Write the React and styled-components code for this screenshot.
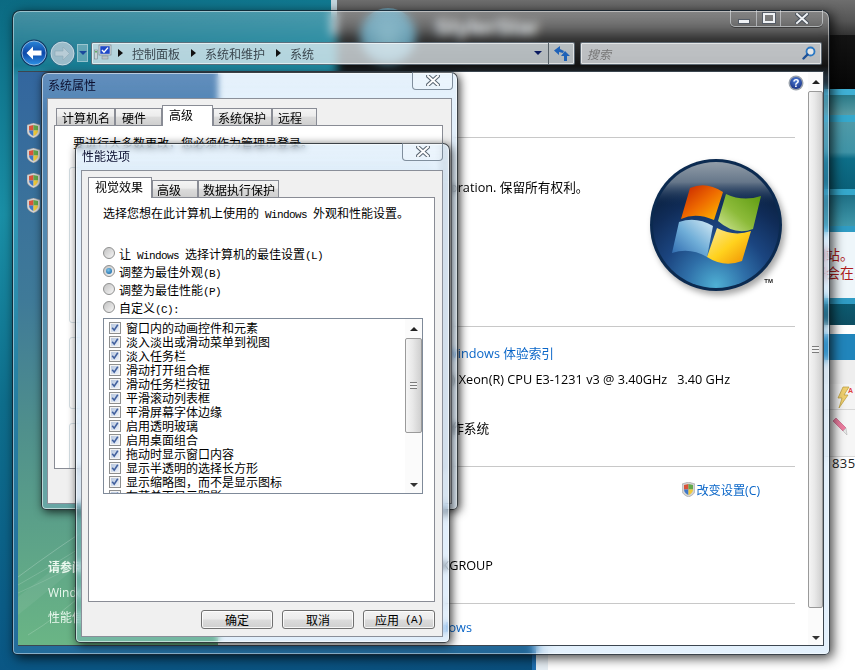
import React from "react";
import styled, { createGlobalStyle } from "styled-components";

const Global = createGlobalStyle`
  html, body { margin: 0; padding: 0; background: #0a4a78; }
  body { font-family: "Noto Sans CJK SC", "Liberation Sans", sans-serif; font-size: 12px; color: #000; }
  * { box-sizing: border-box; }
`;

const Desktop = styled.div`
  position: relative; width: 855px; height: 670px; overflow: hidden;
  background: linear-gradient(165deg, #0b6a82 0%, #1a8fa6 24%, #0e6e8c 45%, #0a5684 75%, #0a4a78 100%);
`;

/* ---------- window behind the explorer ---------- */
const BackPage = styled.div`
  position: absolute; left: 331px; top: 0; width: 524px; height: 670px;
  display: flex; flex-direction: column; overflow: hidden;
`;
const GrayBand = styled.div`
  height: 35px; flex: none; border-left: 6px solid #c3d6de;
  background: linear-gradient(#6e6e6e, #555 60%, #333);
`;
const BlackBand = styled.div`
  height: 54px; flex: none; margin-left: 6px; background: linear-gradient(#141414, #060606);
`;
const Orb = styled.div`
  position: absolute; left: 29px; top: 8px; width: 56px; height: 56px; border-radius: 50%; opacity: .78;
  background: radial-gradient(circle at 50% 55%, #8ed4ea, #5aa9c8 60%, #9fb2bc 100%);
`;
const Brand = styled.div`
  position: absolute; left: 104px; top: 15px; color: #e4eaee; font: bold 22px "Liberation Sans", sans-serif;
`;
const Band = styled.div`
  flex: none; height: ${(p) => p.$h}px; margin-left: 6px; background: ${(p) => p.$bg};
`;
const NoticeBand = styled(Band)`
  color: #b01c1c; font-size: 14px; line-height: 18px; padding: 13px 0 0 475px; white-space: nowrap;
`;
const IconBand = styled(Band)`
  padding: ${(p) => p.$pt}px 0 0 ${(p) => p.$pl}px; border-bottom: 1px solid #d8d8d8;
`;
const CountBand = styled(Band)`
  padding-left: 495px; font: 13px/12px "Open Sans", sans-serif; color: #222; letter-spacing: .4px;
`;
const BottomFill = styled.div`
  flex: 1; margin-left: 6px;
  background: linear-gradient(90deg, transparent 195px, #1f6fb0 195px, #1f6fb0 199px, #e6eef4 199px, #e6eef4 211px, #fff 211px);
`;

/* ---------- explorer ---------- */
const Explorer = styled.div`
  position: absolute; left: 12px; top: 10px; width: 818px; height: 645px;
  padding: 0 5px 8px 5px; display: flex; flex-direction: column;
  border-radius: 8px 8px 5px 5px;
  border: 1px solid rgba(10, 20, 30, .8);
  background-image: linear-gradient(rgba(255,255,255,.24), rgba(255,255,255,.03) 55px, rgba(128,188,240,.22) 66px);
  backdrop-filter: blur(5px);
  box-shadow: inset 0 0 0 1px rgba(255,255,255,.45), 3px 3px 12px rgba(0,0,0,.75);
`;
const CaptionRow = styled.div`
  display: flex; justify-content: flex-end; height: 16px; flex: none; margin-top: -1px; padding-right: 1px;
`;
const Caption = styled.div`
  display: flex; height: 17px; border: 1px solid rgba(235,240,245,.55); border-top: 0;
  border-radius: 0 0 5px 5px; box-shadow: 0 1px 0 rgba(0,0,0,.4);
`;
const CapBtn = styled.div`
  width: ${(p) => p.$w}px; display: flex; align-items: center; justify-content: center;
  border-right: 1px solid rgba(235,240,245,.5);
  &:last-child { border-right: 0; }
`;
const MinGlyph = styled.div`
  width: 12px; height: 5px; margin-top: 6px; background: #eef1f4; border: 1px solid #555c66;
`;
const MaxGlyph = styled.div`
  width: 12px; height: 10px; border: 2px solid #eef1f4; outline: 1px solid #555c66;
`;
const NavRow = styled.div`
  display: flex; align-items: center; height: 28px; margin-top: 13px; padding-left: 2px; flex: none;
`;
const NavDrop = styled.div`
  width: 11px; height: 18px; margin: 0 3px 0 1px; display: flex; align-items: center; justify-content: center;
  border: 1px solid rgba(255,255,255,.35); background: rgba(255,255,255,.28);
`;
const TriDown = styled.div`
  width: 0; height: 0;
  border-left: ${(p) => p.$s || 4}px solid transparent; border-right: ${(p) => p.$s || 4}px solid transparent;
  border-top: ${(p) => p.$s || 4}px solid ${(p) => p.$c || "#0a1a60"};
`;
const Address = styled.div`
  width: 484px; height: 23px; display: flex; align-items: center;
  border: 1px solid rgba(30,45,60,.6); border-radius: 2px;
  box-shadow: inset 0 0 0 1px rgba(255,255,255,.6);
  background: rgba(232,240,244,.74); color: #3b474f; padding-left: 2px;
`;
const Crumb = styled.span`
  margin-left: 9px; white-space: nowrap;
`;
const CrumbArrow = styled.div`
  width: 0; height: 0; margin-left: ${(p) => p.$ml}px; flex: none;
  border-top: 4px solid transparent; border-bottom: 4px solid transparent; border-left: 5px solid #111;
`;
const Spacer = styled.div` flex: 1; `;
const AddrEnd = styled.div`
  width: 26px; height: 21px; margin-left: 6px; display: flex; align-items: center; justify-content: center;
  border-left: 1px solid #555f66;
`;
const Search = styled.div`
  width: 242px; height: 23px; margin-left: 5px; display: flex; align-items: center; justify-content: space-between;
  padding: 0 5px 0 6px; border: 1px solid rgba(30,45,60,.6); border-radius: 2px;
  box-shadow: inset 0 0 0 1px rgba(255,255,255,.6);
  background: rgba(232,236,240,.78); color: #777; font-style: italic;
`;
const Content = styled.div`
  flex: 1; min-height: 0; margin-top: 4px; display: flex; overflow: hidden;
  border: 1px solid #3c4650; border-left: 0;
`;
const Sidebar = styled.div`
  position: relative; width: 200px; flex: none; display: flex; flex-direction: column; justify-content: space-between;
  padding: 51px 0 15px 9px; overflow: hidden;
  background: linear-gradient(#33669e 0%, #3f7a98 40%, #4f8f8c 62%, #6ab585 100%);
`;
const TaskList = styled.div` display: flex; flex-direction: column; gap: 10px; `;
const Task = styled.div` display: flex; align-items: center; height: 15px; `;
const SeeAlso = styled.div` padding-left: 21px; color: #e9f8ee; position: relative; `;
const SeeRow = styled.div`
  height: 25px; line-height: 25px; white-space: nowrap; font-weight: ${(p) => (p.$b ? 700 : 400)};
  font-family: "Open Sans", "Noto Sans CJK SC", sans-serif;
`;
const Swoosh = styled.svg` position: absolute; left: 0; bottom: 0; `;

const Main = styled.div`
  flex: 1; min-width: 0; background: #fff; overflow: hidden; padding-right: 13px;
  font-family: "Open Sans", "Noto Sans CJK SC", sans-serif; font-size: 12.7px;
`;
const Section = styled.div`
  height: ${(p) => p.$h}px; flex: none; padding-top: ${(p) => p.$pt || 0}px;
  border-bottom: ${(p) => (p.$last ? 0 : "1px solid #c8c8c8")};
`;
const HelpSection = styled(Section)`
  display: flex; justify-content: flex-end; align-items: flex-start; padding: 3px 0 0;
  svg { margin-right: -9px; }
`;
const Row = styled.div`
  height: ${(p) => p.$h}px; padding-left: ${(p) => p.$i}px; display: flex; align-items: center; white-space: nowrap;
`;
const Link = styled.span` color: #0a66c8; `;
const WinSection = styled(Section)` display: flex; justify-content: space-between; padding-top: 0; `;
const WinText = styled.div` flex: 1; min-width: 0; padding-top: 36px; `;
const LogoWrap = styled.div` position: relative; width: 132px; height: 132px; flex: none; margin: 21px 13px 0 0; `;
const Tm = styled.span`
  position: absolute; right: 9px; bottom: 7px; font: bold 6px "Liberation Sans", sans-serif; color: #222;
`;
const SettingsRow = styled(Row)` justify-content: flex-end; padding-right: 35px; `;
const ChangeLink = styled(Link)` display: inline-flex; align-items: center; gap: 1px; font-size: 12.2px; `;

/* ---------- scrollbars ---------- */
const Scroll = styled.div`
  width: ${(p) => p.$w}px; flex: none; display: flex; flex-direction: column; align-items: stretch; background: #fbfbfb;
`;
const ScrollBtn = styled.div`
  height: ${(p) => p.$h}px; flex: none; display: flex; align-items: center; justify-content: center;
`;
const Thumb = styled.div`
  height: ${(p) => p.$h}px; flex: none; display: flex; align-items: center; justify-content: center;
  border: 1px solid #9a9a9a; border-radius: 2px;
  background: linear-gradient(90deg, #f5f5f5, #e8e8e8 45%, #cfcfcf);
`;
const Grip = styled.div`
  width: 7px; height: 7px;
  background: repeating-linear-gradient(#7c7c7c 0 1px, #f2f2f2 1px 3px);
`;
const TriUp = styled.div`
  width: 0; height: 0; border-left: 4px solid transparent; border-right: 4px solid transparent; border-bottom: 4px solid #222;
`;

/* ---------- dialogs ---------- */
const Dialog = styled.div`
  position: absolute; left: ${(p) => p.$x}px; top: ${(p) => p.$y}px; width: ${(p) => p.$w}px; height: ${(p) => p.$h}px;
  padding: ${(p) => p.$head}px ${(p) => p.$r}px 5px 5px; border-radius: 7px 7px 5px 5px;
  display: flex; flex-direction: column;
  border: 1px solid rgba(30,35,40,.85);
  background-color: rgba(128, 188, 240, .24);
  background-image: linear-gradient(rgba(255,255,255,.16), rgba(255,255,255,.04) 40px);
  backdrop-filter: blur(3px);
  box-shadow: inset 0 0 0 1px rgba(255,255,255,.55), 2px 2px 10px rgba(0,0,0,.75);
`;
const DialogTitle = styled.div`
  position: absolute; left: 6px; top: 4px; color: #0c1030; font-size: 12px; line-height: 15px;
`;
const DialogClose = styled.div`
  position: absolute; right: ${(p) => p.$r}px; top: -1px; width: 41px; height: 18px; display: flex; align-items: center; justify-content: center;
  border: 1px solid rgba(110,125,140,.85); border-top: 0; border-radius: 0 0 4px 4px;
  background: rgba(255,255,255,.22);
`;
const Inner = styled.div`
  flex: 1; min-height: 0; padding: 6px ${(p) => p.$pr}px 7px 6px; background: #f0f0f0;
  border: 1px solid #8a8f99; display: flex; flex-direction: column;
`;
const Tabs = styled.div`
  display: flex; align-items: flex-end; margin: 0 0 -1px ${(p) => p.$ml || 0}px; position: relative; z-index: 1; flex: none;
`;
const Tab = styled.div`
  width: ${(p) => p.$w}px; height: ${(p) => (p.$active ? 21 : 18)}px;
  padding-left: ${(p) => p.$pl}px; line-height: 17px;
  border: 1px solid #898c95; border-bottom: ${(p) => (p.$active ? 0 : "1px solid #898c95")};
  white-space: nowrap;
  background: ${(p) => (p.$active ? "#fff" : "linear-gradient(#f4f4f4, #ececec 45%, #dcdcdc 50%, #cfcfcf)")};
`;
const Page = styled.div`
  flex: ${(p) => (p.$fixed ? "none" : 1)}; height: ${(p) => (p.$fixed ? `${p.$fixed}px` : "auto")}; min-height: 0;
  background: #fff; border: 1px solid #898c95; overflow: hidden;
  padding: ${(p) => p.$pad};
  display: flex; flex-direction: column;
`;
const Note = styled.div` line-height: 14px; white-space: nowrap; margin-left: ${(p) => p.$ml || 0}px; `;
const Group = styled.div`
  height: ${(p) => p.$h}px; flex: none; margin-top: ${(p) => p.$mt}px; width: 361px;
  border: 1px solid #d5dfe5; border-radius: 3px;
`;
const Mono = styled.span`
  font-family: "Liberation Mono", monospace; font-size: 11px; letter-spacing: -.6px;
`;
const RadioList = styled.div` margin-top: 22px; display: flex; flex-direction: column; `;
const RadioRow = styled.div`
  height: 18px; display: flex; align-items: center; gap: 4px; white-space: nowrap;
`;
const RadioDot = styled.div`
  width: 12px; height: 12px; border-radius: 50%; flex: none; border: 1px solid #8e8f8f;
  display: flex; align-items: center; justify-content: center;
  background: linear-gradient(135deg, #c2c2c2, #f6f6f6);
  &::after {
    content: ""; width: 6px; height: 6px; border-radius: 50%;
    background: ${(p) => (p.$on ? "radial-gradient(circle at 40% 35%, #7ec4ea, #0a5a9c)" : "transparent")};
  }
`;
const ListBox = styled.div`
  margin-top: 2px; width: 320px; height: 176px; flex: none; border: 1px solid #7f8a99; display: flex; background: #fff;
`;
const ListItems = styled.div` flex: 1; min-width: 0; overflow: hidden; padding: 2px 0 0 5px; `;
const ListItem = styled.div`
  height: 14px; display: flex; align-items: center; gap: 5px; white-space: nowrap; line-height: 14px;
`;
const Buttons = styled.div`
  flex: none; display: flex; justify-content: flex-end; gap: 9px; margin-top: 8px;
`;
const Btn = styled.div`
  width: 72px; height: 19px; display: flex; align-items: center; justify-content: center; white-space: pre;
  border: 1px solid #707070; border-radius: 3px; box-shadow: inset 0 0 0 1px rgba(255,255,255,.8);
  background: linear-gradient(#f3f3f3, #ebebeb 48%, #dcdcdc 52%, #cfcfcf);
`;

/* ---------- drawings ---------- */
const Shield = () => (
  <svg width="13" height="15" viewBox="0 0 13 15" style={{ flex: "none" }}>
    <path d="M6.5 0 L13 2 V8 C13 12 9 14 6.5 15 C4 14 0 12 0 8 V2 Z" fill="#d4d4d4" stroke="#8a8a8a" strokeWidth=".5" />
    <path d="M6.5 2 L2 3 V7.5 H6.5 Z" fill="#d9533a" />
    <path d="M6.5 2 L11 3 V7.5 H6.5 Z" fill="#63a84a" />
    <path d="M2 7.5 H6.5 V13 C4.5 12.2 2 10.5 2 7.5 Z" fill="#3f78c8" />
    <path d="M11 7.5 H6.5 V13 C8.5 12.2 11 10.5 11 7.5 Z" fill="#f0c93a" />
  </svg>
);
const CloseX = ({ c = "#eef1f4", o = "#4a525c", s = 14 }) => (
  <svg width={s} height={s - 3} viewBox="0 0 14 11">
    <path d="M2 1 L12 10 M12 1 L2 10" stroke={o} strokeWidth="4" strokeLinecap="square" />
    <path d="M2 1 L12 10 M12 1 L2 10" stroke={c} strokeWidth="2" strokeLinecap="square" />
  </svg>
);
const BackButton = () => (
  <svg width="28" height="28" viewBox="0 0 28 28" style={{ flex: "none" }}>
    <defs>
      <linearGradient id="bk" x1="0" y1="0" x2="0" y2="1">
        <stop offset="0" stopColor="#2a86d8" /><stop offset=".5" stopColor="#0d47a8" /><stop offset="1" stopColor="#2d92e6" />
      </linearGradient>
    </defs>
    <circle cx="14" cy="14" r="13.5" fill="#123a66" />
    <circle cx="14" cy="14" r="12" fill="url(#bk)" stroke="#a9cdea" strokeWidth=".8" />
    <path d="M13 7.5 L6.5 14 L13 20.5 L13 16.5 L21.5 16.5 L21.5 11.5 L13 11.5 Z" fill="#fff" />
  </svg>
);
const ForwardButton = () => (
  <svg width="27" height="27" viewBox="0 0 27 27" style={{ flex: "none", marginLeft: 1 }}>
    <circle cx="13.5" cy="13.5" r="13" fill="rgba(60,110,140,.55)" />
    <circle cx="13.5" cy="13.5" r="11.5" fill="rgba(175,200,212,.85)" stroke="#d8e6ec" strokeWidth=".8" />
    <path d="M14 7 L20.5 13.5 L14 20 L14 16 L6 16 L6 11 L14 11 Z" fill="#b8ccd6" stroke="#8fa9b6" strokeWidth=".6" />
  </svg>
);
const ComputerIcon = () => (
  <svg width="18" height="18" viewBox="0 0 18 18" style={{ flex: "none" }}>
    <rect x="0.5" y="6" width="3" height="9" fill="#c9d3d8" stroke="#7c868c" strokeWidth=".6" />
    <rect x="1.3" y="7" width="1.4" height="1.5" fill="#35a03a" />
    <rect x="5" y="1" width="12" height="10" fill="#d8dfe4" stroke="#7c868c" strokeWidth=".7" />
    <rect x="6.3" y="2.2" width="9.4" height="7.6" fill="#1f49c8" />
    <path d="M8 6 L10 8.2 L14 3.6" stroke="#fff" strokeWidth="1.4" fill="none" />
    <rect x="8" y="12" width="6" height="3" fill="#b9c3c9" stroke="#7c868c" strokeWidth=".5" />
  </svg>
);
const RefreshIcon = () => (
  <svg width="16" height="15" viewBox="0 0 16 15">
    <path d="M6 0 L6 3 L10 5 L9 7 L5 6 L5 9 L0 4.5 Z" fill="#1f62b8" />
    <path d="M11 5 L16 10 L13 10 L13 15 L10 15 L10 10 L7 10 Z" fill="#1f62b8" />
  </svg>
);
const SearchIcon = () => (
  <svg width="14" height="14" viewBox="0 0 14 14">
    <circle cx="8.5" cy="5.5" r="4" fill="rgba(255,255,255,.6)" stroke="#2a78c4" strokeWidth="1.8" />
    <path d="M5.5 8.5 L1.5 12.5" stroke="#1d4f96" strokeWidth="2.4" strokeLinecap="round" />
  </svg>
);
const HelpIcon = () => (
  <svg width="16" height="16" viewBox="0 0 16 16">
    <defs>
      <radialGradient id="hp" cx=".5" cy=".3" r=".8">
        <stop offset="0" stopColor="#4f7fd8" /><stop offset="1" stopColor="#13297c" />
      </radialGradient>
    </defs>
    <circle cx="8" cy="8" r="7.5" fill="#9aa2ac" />
    <circle cx="8" cy="8" r="6" fill="url(#hp)" />
    <text x="8" y="12" textAnchor="middle" fill="#fff" fontSize="11" fontWeight="700" fontFamily="Liberation Sans">?</text>
  </svg>
);
const CheckMark = () => (
  <svg width="12" height="12" viewBox="0 0 12 12" style={{ flex: "none" }}>
    <defs>
      <linearGradient id="cb" x1="0" y1="0" x2="1" y2="1">
        <stop offset="0" stopColor="#b6c6de" /><stop offset="1" stopColor="#eef3fa" />
      </linearGradient>
    </defs>
    <rect x=".5" y=".5" width="11" height="11" fill="#f4f4f4" stroke="#8e8f8f" />
    <rect x="2" y="2" width="8" height="8" fill="url(#cb)" />
    <path d="M3.2 5.8 L5.2 8.2 L8.8 2.8" stroke="#41609e" strokeWidth="1.6" fill="none" />
  </svg>
);
const WindowsLogo = () => (
  <svg width="132" height="132" viewBox="0 0 132 132" style={{ display: "block", overflow: "visible", filter: "drop-shadow(3px 4px 3px rgba(0,0,0,.35))" }}>
    <defs>
      <radialGradient id="orb" cx=".5" cy=".98" r=".8">
        <stop offset="0" stopColor="#4fb0d4" /><stop offset=".3" stopColor="#2f6fa8" /><stop offset=".55" stopColor="#1b4580" /><stop offset=".85" stopColor="#102c58" /><stop offset="1" stopColor="#0c2548" />
      </radialGradient>
      <linearGradient id="gloss" x1="0" y1="0" x2="0" y2="1">
        <stop offset="0" stopColor="#929da8" /><stop offset=".16" stopColor="#66778a" /><stop offset=".34" stopColor="#14305a" stopOpacity="0" />
      </linearGradient>
      <linearGradient id="fr" x1="0" y1="0" x2="1" y2="1">
        <stop offset="0" stopColor="#c41e00" /><stop offset=".5" stopColor="#ee6a00" /><stop offset="1" stopColor="#ffc000" />
      </linearGradient>
      <linearGradient id="fg" x1="1" y1="0" x2="0" y2="1">
        <stop offset="0" stopColor="#5d9a10" /><stop offset=".55" stopColor="#8dbb3a" /><stop offset="1" stopColor="#d4e89c" />
      </linearGradient>
      <linearGradient id="fb" x1="1" y1="0" x2="0" y2="1">
        <stop offset="0" stopColor="#d6ebf5" /><stop offset=".5" stopColor="#70aed8" /><stop offset="1" stopColor="#2a66ac" />
      </linearGradient>
      <linearGradient id="fy" x1="0" y1="0" x2="1" y2="1">
        <stop offset="0" stopColor="#f8e89c" /><stop offset=".5" stopColor="#ffd21e" /><stop offset="1" stopColor="#ee8a00" />
      </linearGradient>
    </defs>
    <circle cx="66" cy="66" r="66" fill="#0b2a50" />
    <circle cx="66" cy="66" r="63" fill="url(#orb)" />
    <circle cx="66" cy="66" r="63" fill="url(#gloss)" />
    <path d="M40 29 Q56 22 73 33 L64 61 Q46 53 31 60 Z" fill="url(#fr)" />
    <path d="M76 35 Q93 43 111 37 L103 70 Q85 77 68 62 Z" fill="url(#fg)" />
    <path d="M29 63 Q46 57 63 67 L57 98 Q40 88 22 94 Z" fill="url(#fb)" />
    <path d="M67 69 Q84 78 101 72 L92 102 Q74 109 57 98 Z" fill="url(#fy)" />
  </svg>
);
const Waves = () => (
  <Swoosh width="200" height="140" viewBox="0 0 200 140">
    <g fill="none" stroke="#fff" strokeOpacity=".22">
      <path d="M0 72 Q40 42 90 10" />
      <path d="M0 80 Q50 52 110 12" strokeOpacity=".16" />
      <path d="M0 88 Q50 66 120 26" strokeOpacity=".14" />
      <path d="M10 130 Q40 112 70 84" strokeOpacity=".18" />
    </g>
    <path d="M0 92 Q40 60 120 0 L130 0 Q50 70 0 110 Z" fill="#fff" fillOpacity=".06" />
  </Swoosh>
);

const effects = [
  "窗口内的动画控件和元素", "淡入淡出或滑动菜单到视图", "淡入任务栏", "滑动打开组合框", "滑动任务栏按钮",
  "平滑滚动列表框", "平滑屏幕字体边缘", "启用透明玻璃", "启用桌面组合", "拖动时显示窗口内容",
  "显示半透明的选择长方形", "显示缩略图，而不是显示图标", "在菜单下显示阴影",
];

const Scrollbar = ({ w, top, thumb }) => (
  <Scroll $w={w}>
    <ScrollBtn $h={top}><TriUp /></ScrollBtn>
    <Thumb $h={thumb}><Grip /></Thumb>
    <Spacer />
    <ScrollBtn $h={w}><TriDown $c="#333" /></ScrollBtn>
  </Scroll>
);

export default function App() {
  return (
    <>
      <Global />
      <Desktop>
        <BackPage>
          <GrayBand />
          <BlackBand />
          <Orb />
          <Brand>StylerStar</Brand>
          <Band $h={6} $bg="#3fb0d4" />
          <Band $h={20} $bg="linear-gradient(#2a7a88, #5a9ca4)" />
          <Band $h={7} $bg="#35a8cc" />
          <Band $h={67} $bg="linear-gradient(#4f9aa8 0%, #3f93a6 45%, #0d6e88 55%, #0a6078)" />
          <Band $h={6} $bg="#35a8cc" />
          <Band $h={31} $bg="linear-gradient(#1f7086, #4098aa)" />
          <Band $h={6} $bg="#2f9cc4" />
          <NoticeBand $h={66} $bg="#eef6fa">
            <div>网站。</div>
            <div>将会在1000</div>
          </NoticeBand>
          <Band $h={6} $bg="#2f9cc4" />
          <Band $h={21} $bg="linear-gradient(#0c5a70, #0e4e62)" />
          <Band $h={9} $bg="#fff" />
          <Band $h={26} $bg="#2185bb" />
          <Band $h={24} $bg="#eeeeee" />
          <IconBand $h={26} $bg="#f4f4f4" $pt={2} $pl={498}>
            <svg width="18" height="24" viewBox="0 0 18 24">
              <path d="M8 1 L14 1 L9 9 L13 9 L4 22 L7 12 L3 12 Z" fill="#f0d070" stroke="#b89a3a" strokeWidth=".7" />
              <text x="13" y="7" fontSize="7" fontWeight="700" fill="#e04040" fontFamily="Liberation Sans">A</text>
            </svg>
          </IconBand>
          <IconBand $h={47} $bg="#f6f6f6" $pt={8} $pl={495}>
            <svg width="18" height="18" viewBox="0 0 18 18">
              <path d="M1 3 L4 0 L14 10 L11 13 Z" fill="#ee7ea0" stroke="#c05078" strokeWidth=".6" />
              <path d="M11 13 L14 10 L15 17 Z" fill="#e8e8e8" stroke="#aaa" strokeWidth=".5" />
            </svg>
          </IconBand>
          <CountBand $h={12} $bg="#fff">835</CountBand>
          <BottomFill />
        </BackPage>

        <Explorer>
          <CaptionRow>
            <Caption>
              <CapBtn $w={26}><MinGlyph /></CapBtn>
              <CapBtn $w={24}><MaxGlyph /></CapBtn>
              <CapBtn $w={41}><CloseX /></CapBtn>
            </Caption>
          </CaptionRow>
          <NavRow>
            <BackButton />
            <ForwardButton />
            <NavDrop><TriDown $c="#1a4a9c" /></NavDrop>
            <Address>
              <ComputerIcon />
              <CrumbArrow $ml={6} />
              <Crumb>控制面板</Crumb>
              <CrumbArrow $ml={11} />
              <Crumb>系统和维护</Crumb>
              <CrumbArrow $ml={11} />
              <Crumb>系统</Crumb>
              <Spacer />
              <TriDown />
              <AddrEnd><RefreshIcon /></AddrEnd>
            </Address>
            <Search>
              <span>搜索</span>
              <SearchIcon />
            </Search>
          </NavRow>
          <Content>
            <Sidebar>
              <Waves />
              <TaskList>
                <Task><Shield /></Task>
                <Task><Shield /></Task>
                <Task><Shield /></Task>
                <Task><Shield /></Task>
              </TaskList>
              <SeeAlso>
                <SeeRow $b>请参阅</SeeRow>
                <SeeRow>Windows Update</SeeRow>
                <SeeRow>性能信息和工具</SeeRow>
              </SeeAlso>
            </Sidebar>
            <Main>
              <HelpSection $h={66}><HelpIcon /></HelpSection>
              <WinSection $h={189}>
                <WinText>
                  <Row $h={24} $i={44}>版权所有 © 2007 Microsoft Corporation. 保留所有权利。</Row>
                </WinText>
                <LogoWrap>
                  <WindowsLogo />
                  <Tm>TM</Tm>
                </LogoWrap>
              </WinSection>
              <Section $h={140} $pt={10}>
                <Row $h={30} $i={228}><Link>Windows 体验索引</Link></Row>
                <Row $h={24} $i={196}>Intel(R) Xeon(R) CPU E3-1231 v3 @ 3.40GHz&nbsp;&nbsp;&nbsp;3.40 GHz</Row>
                <Row $h={24} $i={190} />
                <Row $h={24} $i={190}>64 位操作系统</Row>
              </Section>
              <Section $h={137} $pt={10}>
                <SettingsRow $h={25} $i={190}>
                  <ChangeLink><Shield />改变设置(C)</ChangeLink>
                </SettingsRow>
                <Row $h={25} $i={190} />
                <Row $h={25} $i={190} />
                <Row $h={25} $i={194}>WORKGROUP</Row>
              </Section>
              <Section $h={60} $pt={10} $last>
                <Row $h={25} $i={200}>
                  <Link>Windows</Link>
                </Row>
                <Row $h={22} $i={277}><Link>更改产品密钥(K)</Link></Row>
              </Section>
            </Main>
            <Scrollbar w={15} top={19} thumb={517} />
          </Content>
        </Explorer>

        <Dialog $x={41} $y={72} $w={417} $h={438} $head={25} $r={5}>
          <DialogTitle>系统属性</DialogTitle>
          <DialogClose $r={4}><CloseX c="#fff" o="#5a6672" /></DialogClose>
          <Inner $pr={8}>
            <Tabs $ml={2}>
              <Tab $w={59} $pl={5}>计算机名</Tab>
              <Tab $w={47} $pl={6}>硬件</Tab>
              <Tab $w={51} $pl={6} $active>高级</Tab>
              <Tab $w={59} $pl={4}>系统保护</Tab>
              <Tab $w={45} $pl={5}>远程</Tab>
            </Tabs>
            <Page $fixed={344} $pad="10px 0 0 14px">
              <Note $ml={4}>要进行大多数更改，您必须作为管理员登录。</Note>
              <Group $mt={17} $h={156} />
              <Group $mt={14} $h={72} />
              <Group $mt={14} $h={50} />
            </Page>
          </Inner>
        </Dialog>

        <Dialog $x={75} $y={143} $w={375} $h={500} $head={26} $r={6}>
          <DialogTitle>性能选项</DialogTitle>
          <DialogClose $r={6}><CloseX c="#fff" o="#5a6672" /></DialogClose>
          <Inner $pr={7}>
            <Tabs>
              <Tab $w={64} $pl={6} $active>视觉效果</Tab>
              <Tab $w={46} $pl={4}>高级</Tab>
              <Tab $w={81} $pl={4}>数据执行保护</Tab>
            </Tabs>
            <Page $pad="8px 0 0 14px">
              <Note>选择您想在此计算机上使用的<Mono> Windows </Mono>外观和性能设置。</Note>
              <RadioList>
                <RadioRow><RadioDot /><span>让<Mono> Windows </Mono>选择计算机的最佳设置<Mono>(L)</Mono></span></RadioRow>
                <RadioRow><RadioDot $on /><span>调整为最佳外观<Mono>(B)</Mono></span></RadioRow>
                <RadioRow><RadioDot /><span>调整为最佳性能<Mono>(P)</Mono></span></RadioRow>
                <RadioRow><RadioDot /><span>自定义<Mono>(C):</Mono></span></RadioRow>
              </RadioList>
              <ListBox>
                <ListItems>
                  {effects.map((t) => (
                    <ListItem key={t}><CheckMark />{t}</ListItem>
                  ))}
                </ListItems>
                <Scrollbar w={17} top={19} thumb={95} />
              </ListBox>
            </Page>
            <Buttons>
              <Btn>确定</Btn>
              <Btn>取消</Btn>
              <Btn>应用<Mono> (A)</Mono></Btn>
            </Buttons>
          </Inner>
        </Dialog>
      </Desktop>
    </>
  );
}
